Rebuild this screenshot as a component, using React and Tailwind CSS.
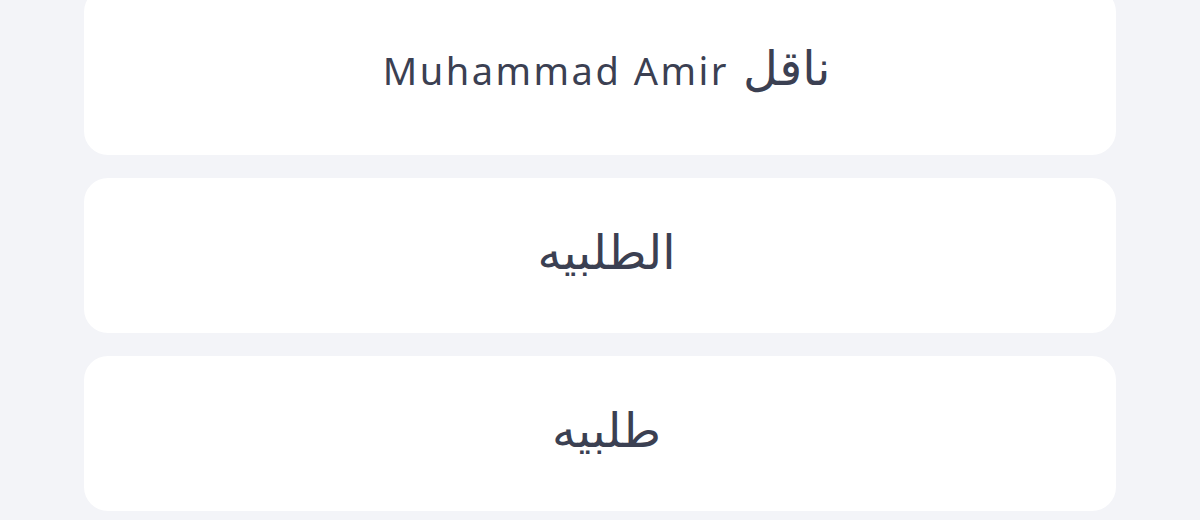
import React from "react";

const items = [
  { latin: "Muhammad Amir", arabic: "ناقل" },
  { arabic: "الطلبيه" },
  { arabic: "طلبيه" },
];

const App = () => {
  return (
    <div className="min-h-screen h-[520px] overflow-hidden bg-[#f3f4f8] font-['Noto_Sans','DejaVu_Sans',sans-serif]">
      <div className="mx-auto w-[1032px] -mt-[12px] flex flex-col gap-[23px]">
        {items.map((item, i) => (
          <div
            key={i}
            className={`bg-white rounded-[24px] flex items-center justify-center pl-[13px] ${
              i === 0 ? "h-[167px]" : "h-[155px]"
            }`}
          >
            <div dir="rtl" className="flex items-baseline gap-[14px] text-[#3b4052] -mt-[10px]">
              <span className="text-[48px] leading-none">{item.arabic}</span>
              {item.latin && (
                <span dir="ltr" className="text-[38px] tracking-[2.5px] leading-none">
                  {item.latin}
                </span>
              )}
            </div>
          </div>
        ))}
      </div>
    </div>
  );
};

export default App;
